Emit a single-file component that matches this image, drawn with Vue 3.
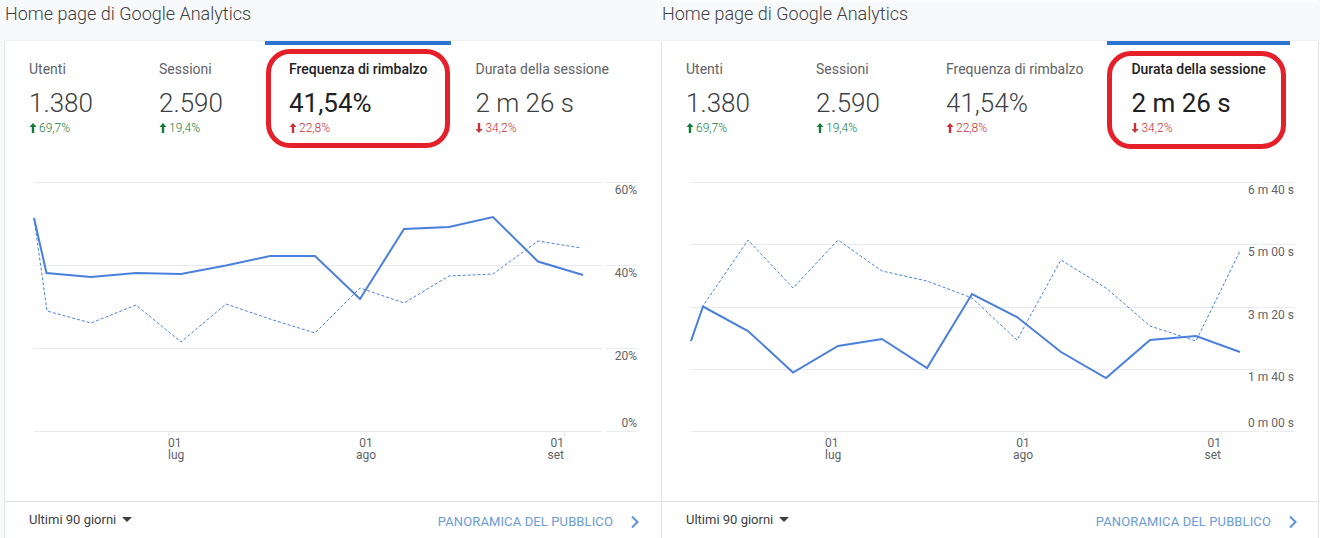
<template>
  <div class="page">
    <section v-for="panel in panels" :key="panel.left" class="panel">
      <h2 class="panel-title">Home page di Google Analytics</h2>
      <div class="card">
        <div class="tabs">
          <div
            v-for="(tab, i) in tabs"
            :key="tab.label"
            :class="['tab', { 'tab-active': i === panel.active }]"
          >
            <div class="tab-label">{{ tab.label }}</div>
            <div class="tab-value">{{ tab.value }}</div>
            <div :class="['tab-delta', tab.good ? 'delta-good' : 'delta-bad']">
              <svg class="delta-arrow" viewBox="0 0 8 10">
                <path v-if="tab.up" d="M4 0 L7.5 4 H5.2 V10 H2.8 V4 H.5 Z" />
                <path v-else d="M4 10 L7.5 6 H5.2 V0 H2.8 V6 H.5 Z" />
              </svg>
              <span>{{ tab.delta }}</span>
            </div>
            <div v-if="i === panel.active" :class="['annotation', panel.annotation]"></div>
          </div>
        </div>

        <svg class="chart" :viewBox="`${panel.left} 170 ${panel.width} 331`">
          <g v-for="g in panel.grid" :key="g.y">
            <line class="grid-line" :x1="panel.left + 29" :x2="panel.left + 597" :y1="g.y + 0.5" :y2="g.y + 0.5" />
            <line class="grid-line" :x1="panel.left + 601" :x2="panel.left + 632" :y1="g.y + 0.5" :y2="g.y + 0.5" />
            <text class="axis-text" :x="panel.labelEnd" :y="g.y + (g.above ? -4 : 12)" text-anchor="end">{{ g.label }}</text>
          </g>
          <g v-for="t in panel.ticks" :key="t.x">
            <line class="grid-line" :x1="t.x + 0.5" :x2="t.x + 0.5" y1="431" y2="437" />
            <text class="axis-text" :x="t.x" y="446.5" :text-anchor="t.anchor">01</text>
            <text class="axis-text" :x="t.x" y="459" :text-anchor="t.anchor">{{ t.month }}</text>
          </g>
          <polyline class="line-prev" :points="panel.prev" />
          <polyline class="line-cur" :points="panel.cur" />
        </svg>

        <div class="card-footer">
          <div class="range">
            Ultimi 90 giorni
            <span class="range-caret"></span>
          </div>
          <a class="report-link">
            PANORAMICA DEL PUBBLICO
            <svg class="chevron" viewBox="0 0 10 14">
              <path d="M2 1.5 L7.5 7 L2 12.5" />
            </svg>
          </a>
        </div>
      </div>
    </section>
  </div>
</template>

<script setup>
const tabs = [
  { label: 'Utenti', value: '1.380', delta: '69,7%', up: true, good: true },
  { label: 'Sessioni', value: '2.590', delta: '19,4%', up: true, good: true },
  { label: 'Frequenza di rimbalzo', value: '41,54%', delta: '22,8%', up: true, good: false },
  { label: 'Durata della sessione', value: '2 m 26 s', delta: '34,2%', up: false, good: false }
]

const panels = [
  {
    left: 5,
    width: 655,
    active: 2,
    annotation: 'annotation-left',
    labelEnd: 637,
    grid: [
      { y: 182, label: '60%' },
      { y: 265, label: '40%' },
      { y: 348, label: '20%' },
      { y: 431, label: '0%', above: true }
    ],
    ticks: [
      { x: 168, anchor: 'start', month: 'lug' },
      { x: 366, anchor: 'middle', month: 'ago' },
      { x: 564, anchor: 'end', month: 'set' }
    ],
    cur: '34,218 46.5,273 91,277 136,273 181,274 226,265.5 270,256 315,256 360,299 404,229 449,227 493,217 538,261.5 583,275',
    prev: '34,218 47,311 91,323 136,305 181,342 226,304 270,319 315,333 360,288 404,303 449,276 493,274 538,241 581,248'
  },
  {
    left: 662,
    width: 656,
    active: 3,
    annotation: 'annotation-right',
    labelEnd: 1294,
    grid: [
      { y: 182, label: '6 m 40 s' },
      { y: 244, label: '5 m 00 s' },
      { y: 307, label: '3 m 20 s' },
      { y: 369, label: '1 m 40 s' },
      { y: 431, label: '0 m 00 s', above: true }
    ],
    ticks: [
      { x: 825, anchor: 'start', month: 'lug' },
      { x: 1023, anchor: 'middle', month: 'ago' },
      { x: 1221, anchor: 'end', month: 'set' }
    ],
    cur: '691,341 703,306.5 748,331 793,372.5 838,346 882,339 927,368 972,294 1017,317 1061,352 1106,378 1150,340 1196,336 1240,352',
    prev: '691,341 703,306 748,240 793,288 838,240 882,271 927,281 972,298 1017,340 1061,260 1106,288 1150,326 1196,341 1240,251'
  }
]
</script>

<style>
html,
body {
  margin: 0;
  background: #f8f9fa;
}
</style>

<style scoped>
.page {
  display: flex;
  gap: 2px;
  width: 1320px;
  height: 538px;
  padding: 0 2px 0 5px;
  box-sizing: border-box;
  overflow: hidden;
  background: #f8f9fa;
  font-family: Roboto, "Liberation Sans", sans-serif;
}

.panel {
  flex: 1;
  min-width: 0;
  display: flex;
  flex-direction: column;
}

.panel:first-child {
  flex: 0 0 655px;
}

.panel-title {
  margin: 0;
  height: 41px;
  padding-top: 2px;
  box-sizing: border-box;
  font-size: 18px;
  line-height: 24px;
  font-weight: 300;
  color: #3c4043;
}

.panel:last-child .panel-title {
  border-top: 2px solid #fff;
  padding-top: 0;
}

.card {
  flex: 1;
  display: flex;
  flex-direction: column;
  background: #fff;
  box-shadow: -1px 0 0 #e6e7e9, 0 -1px 0 #eef0f1, 2px 0 0 #fff;
}

.panel:last-child .card {
  box-shadow: -1px 0 0 #e2e3e5, 0 -1px 0 #eef0f1, 1px 0 0 #e2e3e5, 2px 0 0 #fff;
}

.tabs {
  display: flex;
  height: 129px;
}

.tab {
  position: relative;
  min-width: 82px;
  padding: 15px 24px 0;
  border-top: 4px solid transparent;
  box-sizing: content-box;
  height: 110px;
}

.tab-active {
  border-top-color: #2a75d3;
}

.tab-label {
  font-size: 14px;
  line-height: 18px;
  color: #5f6368;
  white-space: nowrap;
}

.tab-value {
  margin-top: 9px;
  font-size: 26px;
  line-height: 32px;
  font-weight: 300;
  color: #3c4043;
  white-space: nowrap;
}

.tab-delta {
  margin-top: 1px;
  display: flex;
  align-items: center;
  gap: 2px;
  font-size: 12px;
  line-height: 16px;
  font-weight: 300;
}

.tab-active .tab-label {
  font-weight: 500;
  color: #202124;
}

.tab-active .tab-value {
  font-weight: 400;
  color: #202124;
}

.delta-good {
  color: #137a3a;
}

.delta-bad {
  color: #c8303a;
}

.delta-arrow {
  width: 8px;
  height: 10px;
  fill: currentColor;
}

.annotation {
  position: absolute;
  box-sizing: border-box;
  border: 5px solid #e5202b;
  border-radius: 24px;
  pointer-events: none;
}

.annotation-left {
  top: 4px;
  left: 1px;
  right: 1px;
  height: 99px;
}

.annotation-right {
  top: 6px;
  left: 0;
  right: 4px;
  height: 98px;
}

.chart {
  display: block;
  width: 100%;
  height: 331px;
  flex-shrink: 0;
}

.grid-line {
  stroke: #e8eaed;
  stroke-width: 1;
}

.axis-text {
  font-size: 12px;
  fill: #5f6368;
}

.line-cur {
  fill: none;
  stroke: #4a80dc;
  stroke-width: 2;
}

.line-prev {
  fill: none;
  stroke: #4a80dc;
  stroke-width: 1;
  stroke-dasharray: 3 2;
}

.card-footer {
  flex: 1;
  display: flex;
  align-items: center;
  justify-content: space-between;
  padding: 0 20px 0 24px;
  border-top: 1px solid #dfe1e5;
}

.range {
  display: flex;
  align-items: center;
  gap: 6px;
  margin-top: -2px;
  font-size: 13px;
  color: #3c4043;
}

.range-caret {
  width: 0;
  height: 0;
  border-left: 5px solid transparent;
  border-right: 5px solid transparent;
  border-top: 5px solid #3c4043;
  margin-top: 1px;
}

.report-link {
  display: flex;
  align-items: center;
  gap: 17px;
  margin-top: 3px;
  font-size: 13px;
  letter-spacing: 0.12px;
  color: #6b9bd6;
}

.chevron {
  width: 10px;
  height: 14px;
  fill: none;
  stroke: #5b93d8;
  stroke-width: 2;
}
</style>
